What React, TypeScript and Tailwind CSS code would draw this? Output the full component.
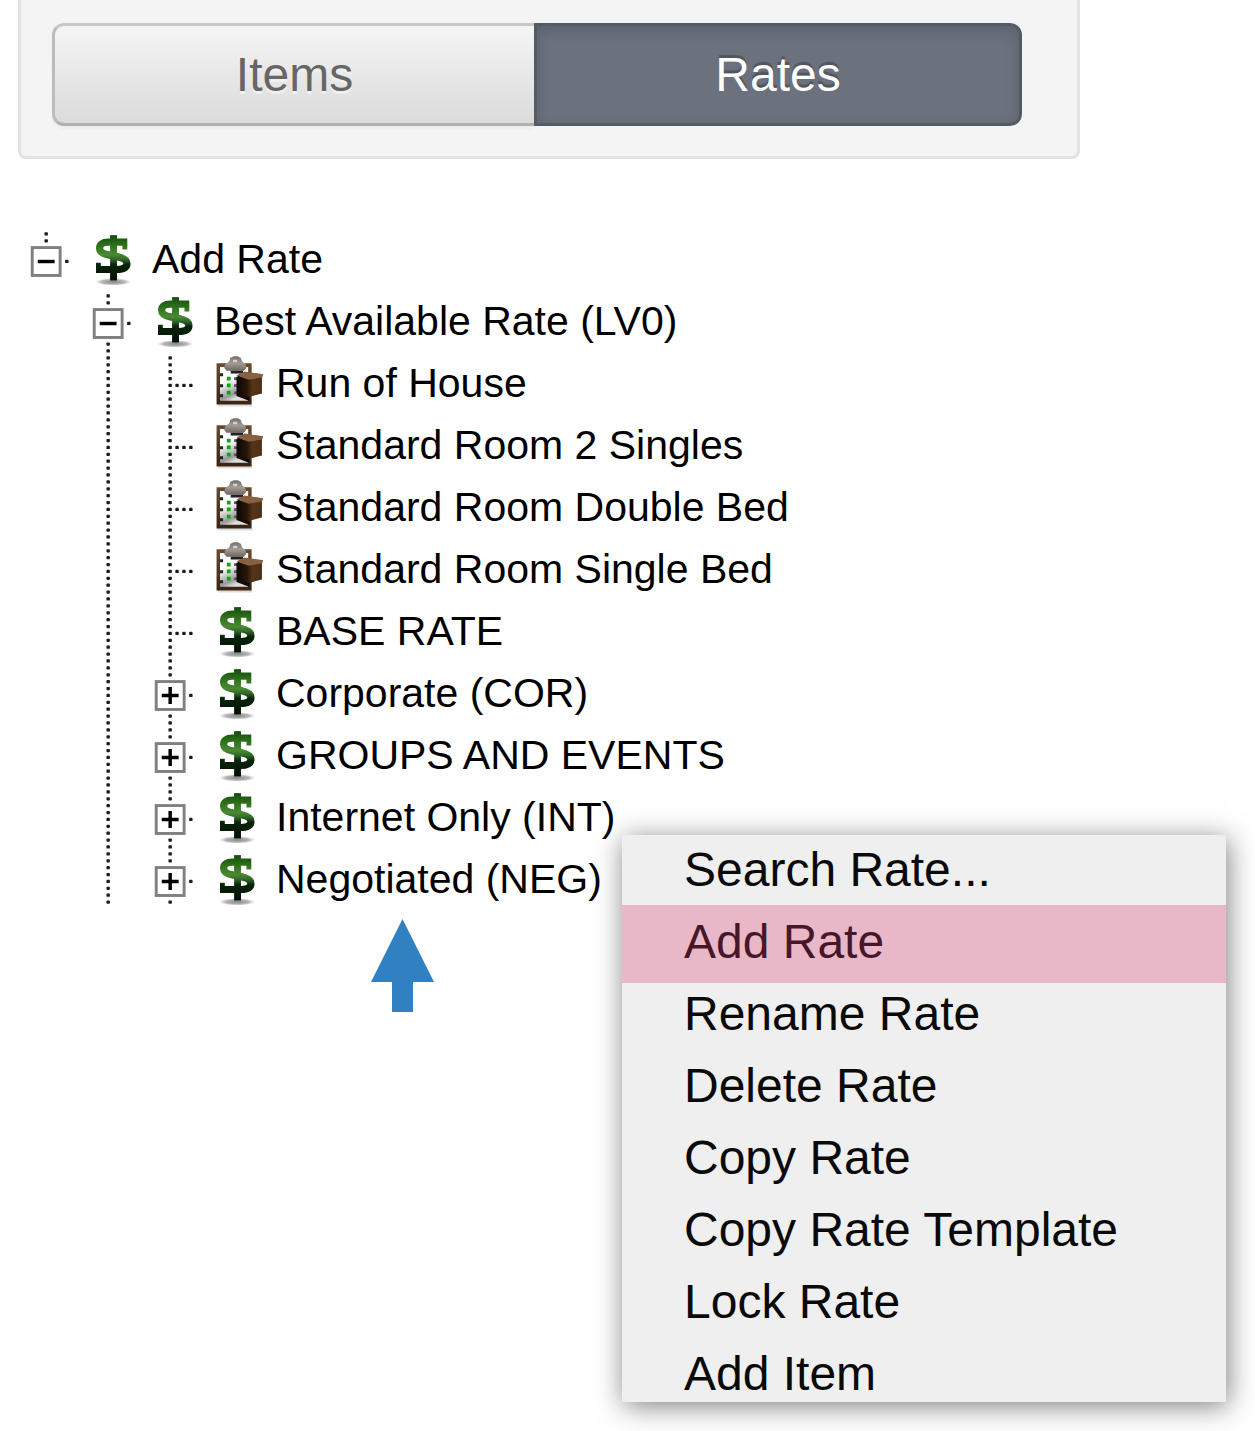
type Cell = "blank" | "line" | "branch" | "minus" | "minusRoot" | "plus";
type IconName = "dollar" | "clipboard";

const rows: { cells: Cell[]; icon: IconName; label: string }[] = [
  { cells: ["minusRoot"], icon: "dollar", label: "Add Rate" },
  { cells: ["blank", "minus"], icon: "dollar", label: "Best Available Rate (LV0)" },
  { cells: ["blank", "line", "branch"], icon: "clipboard", label: "Run of House" },
  { cells: ["blank", "line", "branch"], icon: "clipboard", label: "Standard Room 2 Singles" },
  { cells: ["blank", "line", "branch"], icon: "clipboard", label: "Standard Room Double Bed" },
  { cells: ["blank", "line", "branch"], icon: "clipboard", label: "Standard Room Single Bed" },
  { cells: ["blank", "line", "branch"], icon: "dollar", label: "BASE RATE" },
  { cells: ["blank", "line", "plus"], icon: "dollar", label: "Corporate (COR)" },
  { cells: ["blank", "line", "plus"], icon: "dollar", label: "GROUPS AND EVENTS" },
  { cells: ["blank", "line", "plus"], icon: "dollar", label: "Internet Only (INT)" },
  { cells: ["blank", "line", "plus"], icon: "dollar", label: "Negotiated (NEG)" },
];

const menuItems = [
  "Search Rate...",
  "Add Rate",
  "Rename Rate",
  "Delete Rate",
  "Copy Rate",
  "Copy Rate Template",
  "Lock Rate",
  "Add Item",
];

const allDots = [1, 3, 5, 7, 9, 11, 13, 15, 17];

function verticalDots(cell: Cell) {
  if (cell === "blank") return [];
  if (cell === "minusRoot") return [1, 3];
  if (cell === "minus" || cell === "plus") return [1, 3, 15, 17];
  return allDots;
}

function horizontalDots(cell: Cell) {
  if (cell === "branch") return [11, 13, 15];
  if (cell === "blank" || cell === "line") return [];
  return [15];
}

function Connector({ cell }: { cell: Cell }) {
  const boxed = cell === "minus" || cell === "minusRoot" || cell === "plus";
  const drawing = (
    <svg viewBox="0 0 18 18" className="block size-[62px]" aria-hidden="true">
      {verticalDots(cell).map((y) => (
        <rect key={y} x="8.55" y={y - 0.35} width="1" height="0.95" rx="0.25" fill="#1c1c1c" />
      ))}
      {horizontalDots(cell).map((x) => (
        <rect key={x} x={x - 0.45} y="8.65" width="1" height="0.95" rx="0.25" fill="#1c1c1c" />
      ))}
      {boxed && (
        <>
          <rect x="5" y="5.1" width="8.1" height="8.1" fill="#fff" stroke="#808080" strokeWidth="0.85" />
          <path
            d={cell === "plus" ? "M6.6 9.15h4.9M9.05 6.7v4.9" : "M6.6 9.15h4.9"}
            stroke="#000"
            strokeWidth="1"
          />
        </>
      )}
    </svg>
  );
  if (!boxed) return <span className="shrink-0">{drawing}</span>;
  return (
    <button type="button" className="shrink-0" aria-label={cell === "plus" ? "Expand" : "Collapse"}>
      {drawing}
    </button>
  );
}

function DollarIcon() {
  return (
    <svg viewBox="0 0 16 16" className="mt-px block size-[55px] shrink-0" aria-hidden="true">
      <defs>
        <linearGradient id="dollarFill" gradientUnits="userSpaceOnUse" x1="0" y1="1.2" x2="0" y2="14.2">
          <stop offset="0" stopColor="#144a10" />
          <stop offset="0.18" stopColor="#286a16" />
          <stop offset="0.44" stopColor="#4a8a32" />
          <stop offset="0.54" stopColor="#33692a" />
          <stop offset="0.66" stopColor="#08240a" />
          <stop offset="1" stopColor="#021004" />
        </linearGradient>
        <radialGradient id="dollarShadow">
          <stop offset="0" stopColor="#777" stopOpacity="0.9" />
          <stop offset="0.65" stopColor="#999" stopOpacity="0.7" />
          <stop offset="1" stopColor="#ccc" stopOpacity="0" />
        </radialGradient>
      </defs>
      <ellipse cx="8.200" cy="14.800" rx="5.400" ry="1.100" fill="url(#dollarShadow)" />
      <g stroke="url(#dollarFill)" fill="none">
        <path
          d="M12.300 3.250H6.800C5 3.250 4.250 4 4.250 5c0 1.100.8 1.600 2.600 1.950l2.500.5c1.900.4 2.850 1 2.850 2 0 1.200-1.100 1.750-3.100 1.750H3.200"
          strokeWidth="2.100"
        />
        <path d="M11.600 4v1.400M3.900 9.200v2" strokeWidth="1.400" />
        <path d="M8.300 1.200v13.200" strokeWidth="2" />
      </g>
    </svg>
  );
}

function ClipboardIcon() {
  return (
    <svg viewBox="0 0 16 16" className="mt-0.5 block size-[55px] shrink-0" aria-hidden="true">
      <defs>
        <linearGradient id="paper" x1="0" y1="0" x2="0.4" y2="1">
          <stop offset="0.45" stopColor="#fff" />
          <stop offset="0.85" stopColor="#999" />
          <stop offset="1" stopColor="#ddd" />
        </linearGradient>
        <linearGradient id="board" x1="0" y1="0" x2="0" y2="1">
          <stop offset="0" stopColor="#6b4a2e" />
          <stop offset="1" stopColor="#3a2312" />
        </linearGradient>
        <linearGradient id="carton" x1="0" y1="0" x2="1" y2="0">
          <stop offset="0" stopColor="#0d0704" />
          <stop offset="0.4" stopColor="#2a1709" />
          <stop offset="0.6" stopColor="#55351a" />
          <stop offset="1" stopColor="#4c2e16" />
        </linearGradient>
        <linearGradient id="clip" x1="0" y1="0" x2="0" y2="1">
          <stop offset="0" stopColor="#77706c" />
          <stop offset="0.5" stopColor="#a39a94" />
          <stop offset="1" stopColor="#6e6560" />
        </linearGradient>
      </defs>
      <path d="M2.600 14h10v.7h-10z" fill="#ddd" />
      <path d="M2.200 2.100h10.200v12H2.200z" fill="url(#board)" />
      <path d="M3.200 3.200h8.200v9.800H3.200z" fill="url(#paper)" />
      <path d="M3.200 5h.9v.9h-.9zM3.200 8.200h.9v.9h-.9zM3.200 11.100h.9v.9h-.9z" fill="#222" />
      <path d="M5.200 6h1.100v1.100H5.200zM5.200 8h1.100v1.100H5.200zM5.200 10.100h1.100v1.100H5.200z" fill="#08a80c" />
      <path d="M7.300 6.200h1v.8h-1zM7.300 8.200h1v.8h-1zM7.300 10.300h1v.8h-1z" fill="#555" />
      <path d="M6.300 4.200h3.600v.9H6.300z" fill="#222" />
      <path d="M6.200.5 7.200.1h1.200l.9.500.3.900 1 .9.300 1-.8.900H5.100l-.7-.9.300-1 1.200-.9z" fill="url(#clip)" />
      <path d="M7 1.100h1.200v.7H7z" fill="#d8d0ca" />
      <path d="m8 6 3.800.6V13.100L8 11.600z" fill="#120a05" />
      <path d="M8.300 5.600 11.500 6.800l3.900-.8v4.900l-3.700 1-3.400-.8z" fill="url(#carton)" />
      <path d="m8 5.600 2.400-1.100 5.400.8-.3.900-4 .7z" fill="#866040" />
    </svg>
  );
}

export default function App() {
  return (
    <main className="relative min-h-[1431px] overflow-hidden bg-white font-['Liberation_Sans',Arial,sans-serif] text-black">
      <section className="mr-[175px] ml-[18px] rounded-b-lg border-[3px] border-t-0 border-[#e3e3e3] bg-[#f4f4f4] px-[31px] pt-[23px] pb-[30px]">
        <div className="mr-6 grid h-[103px] grid-cols-[482fr_488fr] text-[48px]">
          <button
            type="button"
            className="rounded-l-xl border-[3px] border-r-0 border-[#c8c8c8] border-b-[#b0b0b0] border-l-[#bcbcbc] bg-linear-to-b from-[#f5f5f5] to-[#dbdbdb] text-[#666] shadow-[0_3px_3px_rgba(0,0,0,0.03)] [text-shadow:0_3px_0_#f0f0f0]"
          >
            Items
          </button>
          <button
            type="button"
            aria-pressed="true"
            className="rounded-r-xl border-[3px] border-[#535b66] bg-[#6b717d] text-white shadow-[inset_0_4px_14px_rgba(0,0,0,0.15)] [text-shadow:0_-3px_1px_rgba(0,0,0,0.25)]"
          >
            Rates
          </button>
        </div>
      </section>

      <ul className="mt-[71px] ml-[15px] text-[41px]">
        {rows.map((row) => (
          <li key={row.label} className="flex h-[62px] items-start overflow-hidden last:h-[55px]">
            {row.cells.map((cell, i) => (
              <Connector key={i} cell={cell} />
            ))}
            <span className="ml-2 shrink-0">
              {row.icon === "dollar" ? <DollarIcon /> : <ClipboardIcon />}
            </span>
            <a href="#" className="ml-3 leading-[58px] whitespace-nowrap">
              {row.label}
            </a>
          </li>
        ))}
      </ul>

      <svg viewBox="0 0 63 93" className="mt-[14px] ml-[371px] block h-[93px] w-[63px]" aria-hidden="true">
        <path d="M31.500 0 63 63H42v30H21V63H0z" fill="#3181c2" />
      </svg>

      <ul className="absolute top-[835px] left-[622px] w-[604px] bg-[#efefef] text-[48px] shadow-[2px_4px_26px_rgba(0,0,0,0.5)]">
        {menuItems.map((item) => (
          <li key={item} className="relative h-[72px] last:h-[63px]">
            <button type="button" className="block w-full pl-[62px] text-left leading-[70px] whitespace-nowrap text-[#0a0a0a]">
              {item}
            </button>
            {item === "Add Rate" && (
              <span className="pointer-events-none absolute inset-x-0 -top-0.5 -bottom-1 bg-[rgba(216,56,112,0.3)]" />
            )}
          </li>
        ))}
      </ul>
    </main>
  );
}
